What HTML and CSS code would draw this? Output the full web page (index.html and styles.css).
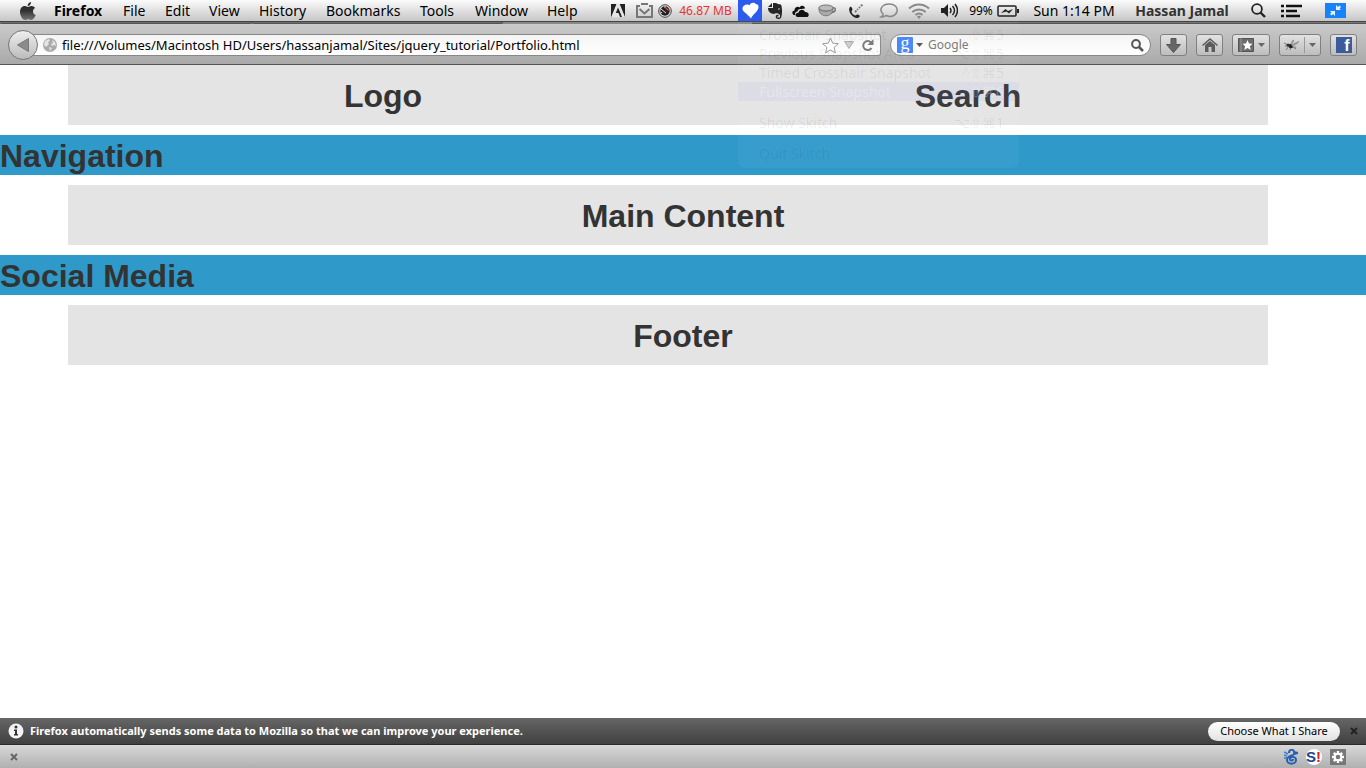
FILE: index.html
```html
<!DOCTYPE html>
<html lang="en">
<head>
    <meta charset="UTF-8">
    <meta name="viewport" content="width=device-width, initial-scale=1.0">
    <title>Portfolio</title>
    <link rel="stylesheet" href="styles.css">
</head>
<body>
    <header class="menubar">
        <nav class="app-menu">
            <button class="apple" aria-label="Apple menu">
                <svg width="16" height="18" viewBox="0 0 16 18">
                    <defs><linearGradient id="appleFill" x1="0" y1="0" x2="0" y2="1"><stop offset="0" stop-color="#222"/><stop offset=".5" stop-color="#333"/><stop offset="1" stop-color="#777"/></linearGradient></defs>
                    <path d="M11 0c.2 2-1.400 4-3.300 4C7.500 2 9 .4 11 0zM8 5c1 0 1.800-.9 3.500-.9 1.400 0 2.700.7 3.500 1.900-3 1.800-2.500 5.900.7 7.100C14.800 15.500 13.300 18 11.500 18c-1.200 0-1.700-.8-3.200-.8S6.200 18 5 18C2.500 18 0 13.500 0 10c0-3.800 2.400-5.900 4.700-5.900C6.200 4.100 7.200 5 8 5z" fill="url(#appleFill)"/>
                </svg>
            </button>
            <button class="bold">Firefox</button>
            <button>File</button>
            <button>Edit</button>
            <button>View</button>
            <button>History</button>
            <button>Bookmarks</button>
            <button>Tools</button>
            <button>Window</button>
            <button>Help</button>
        </nav>
        <div class="tray">
            <svg width="14" height="13" viewBox="0 0 14 13"><path d="M0 0h14v13H0z" fill="#222"/><path d="M5.300 0h3.400L14 13h-3L8.800 7.500 7 3.500 4.800 9h2.700L9 13H0z" fill="#e6e6e6"/><path d="M0 0h5.300L0 13z" fill="#222"/></svg>
            <svg width="17" height="15" viewBox="0 0 17 15"><path d="M4 3H1v11h15V3h-3" fill="none" stroke="#777" stroke-width="2"/><path d="M3.500 6l5 4.500 5-4.500" fill="none" stroke="#777" stroke-width="2"/><path d="M5 1h7" stroke="#777" stroke-width="2"/></svg>
            <svg width="14" height="14" viewBox="0 0 14 14"><circle cx="7" cy="7" r="6.300" fill="#ddd" stroke="#444"/><circle cx="7" cy="7" r="4.700" fill="#222"/><path d="M3 5l5 4M7 2v2M3 9l1-1" stroke="#ddd"/><path d="M7.500 3.500l3 3" stroke="#e33" stroke-width="1.500"/></svg>
            <span class="memory">46.87 MB</span>
            <div class="skitch">
                <button class="skitch-button" aria-label="Skitch">
                    <svg width="17" height="17" viewBox="0 0 17 17"><path d="M7.500 3.500C6 1.500 1 2.500.5 6c-.5 4 4 4.500 8.500 10.500 1.500-4.500 8-7 7.500-12C16 2 14.500 2.200 14 2.500 13.500 0 8 0 7.500 3.500z" fill="#fff"/></svg>
                </button>
                <div class="skitch-menu">
                    <button>Crosshair Snapshot <span>⇧⌘5</span></button>
                    <button>Previous Snapshot Area <span>⌥⇧⌘5</span></button>
                    <button>Timed Crosshair Snapshot <span>^⇧⌘5</span></button>
                    <button class="selected">Fullscreen Snapshot <span>⇧⌘6</span></button>
                    <button class="separated">Show Skitch <span>⌥⇧⌘1</span></button>
                    <button class="separated">Quit Skitch</button>
                </div>
            </div>
            <svg width="14" height="16" viewBox="0 0 14 16"><path d="M4 0v4H0zM5 0h3c1 0 1 .8 2 1 2.500.3 3.300.5 3.500 2 .8 4 .6 8.500-.2 11-.5 1.500-1.300 2-2.800 2-2.200 0-2.800-1-2.800-2.400s1-2 2.800-1.900v1.600H9.300v1.200H12V12C10 9.500 8 11 7.500 10 7 12 0 11 0 5h5z" fill="#262626"/><circle cx="11" cy="6" r=".8" fill="#ddd"/></svg>
            <svg width="17" height="12" viewBox="0 0 17 12"><path d="M2 10C-.5 9 0 5.500 2.500 5.500 2.500 2 6 1 7.500 2.500 9-.5 13 .5 13 3.500L9.500 4C7 3.500 5.500 5 5.500 6.500 3 7 2.500 9 3.500 10z" fill="#111"/><path d="M5 12C2.500 11 3.500 7.500 6.500 7.800 7 4 12 4 13 7c3.500-.5 5 3.500 2.500 5z" fill="#111"/></svg>
            <svg width="18" height="13" viewBox="0 0 18 13"><ellipse cx="8" cy="4" rx="7.300" ry="3" fill="#bbb" stroke="#777"/><path d="M1 5c0 9 14 9 14 0-4 3-10 3-14 0z" fill="#aaa" stroke="#777"/><path d="M14.500 4c4-1 4 4-1 4.500" fill="none" stroke="#777" stroke-width="1.500"/></svg>
            <svg width="15" height="16" viewBox="0 0 15 16"><path d="M1 4c1-.8 2 0 2.500 2.500.1.900-1 1.200-1 2 .3 2 2 3.700 4 4 .8 0 1-1.200 2-1 2 .5 2.800 1.200 2 2.200C9 16 5.500 15 3.500 13 .5 10.500-.8 6 1 4z" fill="#222"/><path d="M6 9l3-3M10 5l1-1M12 3l2-2" stroke="#777" stroke-width="2" stroke-dasharray="2 1"/></svg>
            <svg width="19" height="16" viewBox="0 0 19 16"><path d="M2 14c2-1 2.500-2 2-3C-1 6 4 1 10 1s9 3.500 8 7.500C17 13 11 14.500 7 12.500 5.500 14 4 14.200 2 14z" fill="none" stroke="#888" stroke-width="1.500"/></svg>
            <svg width="22" height="16" viewBox="0 0 22 16"><path d="M1 5.500c6-5.300 14-5.300 20 0M4.300 9c4-3.500 9.400-3.500 13.400 0M7.500 12c2.300-2 4.700-2 7 0" fill="none" stroke="#888" stroke-width="2"/><path d="M9 13.500q2-1.500 4 0L11 16z" fill="#888"/></svg>
            <svg width="17" height="15" viewBox="0 0 17 15"><path d="M0 5h3l4-4v13l-4-4H0z" fill="#222"/><path d="M9 5q2 2.500 0 5M11.500 3q4 4.500 0 9M14 1q5 6.500 0 13" fill="none" stroke="#222" stroke-width="1.500"/></svg>
            <span class="percent">99%</span>
            <svg width="22" height="12" viewBox="0 0 22 12"><rect x="1" y="1" width="18" height="10" rx="1" fill="none" stroke="#222" stroke-width="1.500"/><path d="M20 4h2v4h-2z" fill="#222"/><path d="M4 8l4.500-4 2.500 2 5-2-4 4.500-2.500-2z" fill="#222"/></svg>
            <span>Sun 1:14 PM</span>
            <span class="user">Hassan Jamal</span>
            <svg width="15" height="15" viewBox="0 0 15 15"><circle cx="6" cy="6" r="4.900" fill="none" stroke="#222" stroke-width="1.800"/><path d="M9.500 9.500L14 14" stroke="#222" stroke-width="2.400"/></svg>
            <svg width="22" height="14" viewBox="0 0 22 14"><path d="M0 2h3M0 7h3M0 12h3M5 2h16M5 7h11M5 12h14" stroke="#111" stroke-width="2.600"/></svg>
            <svg width="21" height="15" viewBox="0 0 21 15"><path d="M0 0h21v15H0z" fill="#1683fb"/><path d="M11 2v5h5l-1.500-1.500L16 4l-1.500-1.500L13 4zM10 13V8H5l1.500 1.500L5 11l1.500 1.500L8 11z" fill="#e8f2ff"/></svg>
        </div>
    </header>

    <div class="tab-strip"><div class="tab"></div><div class="tab"></div><div class="tab-current"></div><div class="tab-rest"></div></div>

    <div class="toolbar">
        <button class="back" aria-label="Back"><svg width="12" height="14" viewBox="0 0 12 14"><path d="M11.500.5v13L.5 7z" fill="#8b8b8b" stroke="#777"/></svg></button>
        <div class="address">
            <svg width="14" height="14" viewBox="0 0 14 14"><circle cx="7" cy="7" r="7" fill="#aaa"/><path d="M2 3l4-2 1 2-2 1 1 2-3 3-2-2zM9 2l3 2 1 4-2-1-2 1-1-2 2-1zM6 9l3 1-2 3z" fill="#e5e5e5"/></svg>
            <input type="text" aria-label="Address" value="file:///Volumes/Macintosh HD/Users/hassanjamal/Sites/jquery_tutorial/Portfolio.html">
            <svg width="17" height="17" viewBox="0 0 17 17"><path d="M8.500 1l2.200 5.200 5.600.5-4.200 3.700 1.300 5.500-4.900-3-4.900 3 1.300-5.500L.7 6.700l5.600-.5z" fill="#fff" stroke="#999"/></svg>
            <svg width="10" height="8" viewBox="0 0 10 8"><path d="M.5.5h9L5 7.500z" fill="#ccc" stroke="#aaa"/></svg>
            <svg class="reload" width="13" height="13" viewBox="0 0 13 13"><path d="M10 3.500A4.500 4.500 0 1 0 10.500 9" fill="none" stroke="#777" stroke-width="2"/><path d="M12.500 0v6h-6z" fill="#777"/></svg>
        </div>
        <div class="search">
            <span class="google">g</span>
            <svg width="7" height="4" viewBox="0 0 7 4"><path d="M0 0h7L3.500 4z" fill="#555"/></svg>
            <input type="text" aria-label="Search the web" placeholder="Google">
            <svg width="13" height="13" viewBox="0 0 13 13"><circle cx="5" cy="5" r="3.900" fill="none" stroke="#555" stroke-width="2"/><path d="M8 8l4 4" stroke="#555" stroke-width="2.500"/></svg>
        </div>
        <button class="tool" aria-label="Downloads"><svg width="15" height="15" viewBox="0 0 15 15"><path d="M5 .5h5v6h4.500l-7 8-7-8H5z" fill="#666" stroke="#555"/></svg></button>
        <button class="tool" aria-label="Home"><svg width="16" height="14" viewBox="0 0 16 14"><path d="M8 0l8 7-1 1-7-6-7 6-1-1zM3 7l5-4 5 4v7H9.500V9h-3v5H3z" fill="#5c5c5c"/></svg></button>
        <button class="tool wide" aria-label="Bookmarks list">
            <svg width="16" height="14" viewBox="0 0 16 14"><path d="M.5.500h15v13H.5z" fill="#6c6c6c" stroke="#555"/><path d="M3 0v14" stroke="#999"/><path d="M9.500 2l1.500 3.500 3.500.3-2.600 2.400.8 3.800-3.200-2-3.200 2 .8-3.800-2.600-2.400 3.500-.3z" fill="#fff"/></svg>
            <svg width="7" height="4" viewBox="0 0 7 4"><path d="M0 0h7L3.500 4z" fill="#666"/></svg>
        </button>
        <button class="tool wider" aria-label="Firebug">
            <svg width="16" height="14" viewBox="0 0 16 14"><path d="M0 5l4 2M2 12l3-4M1 8h4M6 12l1-4M9 9l3 2" stroke="#777" fill="none"/><circle cx="4" cy="7" r="1.500" fill="#333"/><circle cx="7" cy="8" r="2.300" fill="#222"/><path d="M7 6c0-3 2-5 3-4 .5 1-1 3-2 4l7-3c1 1-2 4-7 5 4 0 5 1 4 2-2 0-4-1-5-4z" fill="#999"/></svg>
            <i class="divider"></i>
            <svg width="7" height="4" viewBox="0 0 7 4"><path d="M0 0h7L3.500 4z" fill="#666"/></svg>
        </button>
        <button class="tool" aria-label="Facebook"><span class="facebook">f</span></button>
    </div>

    <main>
        <div class="container split">
            <h1>Logo</h1>
            <h1>Search</h1>
        </div>
        <div class="band"><h1>Navigation</h1></div>
        <div class="container"><h1>Main Content</h1></div>
        <div class="band"><h1>Social Media</h1></div>
        <div class="container"><h1>Footer</h1></div>
    </main>

    <div class="notification">
        <svg width="16" height="16" viewBox="0 0 16 16"><circle cx="8" cy="8" r="7.500" fill="#f4f4f4"/><circle cx="8" cy="4" r="1.500" fill="#333"/><path d="M6 6.500h3V11h1v1.500H6V11h1V8H6z" fill="#333"/></svg>
        <p>Firefox automatically sends some data to Mozilla so that we can improve your experience.</p>
        <button class="choose">Choose What I Share</button>
        <button class="close" aria-label="Dismiss"><svg width="8" height="8" viewBox="0 0 8 8"><path d="M1 1l6 6M7 1L1 7" stroke="#222" stroke-width="2"/></svg></button>
    </div>
    <footer class="addon-bar">
        <button class="close" aria-label="Close add-on bar"><svg width="8" height="8" viewBox="0 0 8 8"><path d="M1 1l6 6M7 1L1 7" stroke="#666" stroke-width="2"/></svg></button>
        <div class="addons">
            <svg width="14" height="16" viewBox="0 0 14 16"><path d="M5 4c0-4 5-4 5-1l4 1-4 1c0 2-7 1-7 6 0 5 9 5 9 0 0-4-6-4-6-1 0 2 3 2 3 0" fill="none" stroke="#285fb0" stroke-width="2"/><path d="M0 3l4 2M0 6l3 1M0 9h3" stroke="#3f7bd0" stroke-width="1.500"/></svg>
            <span class="stumble">S<b>!</b></span>
            <svg width="16" height="16" viewBox="0 0 16 16"><path d="M0 0h16v16H0z" fill="#777"/><path d="M8 2v12M2 8h12M3.800 3.800l8.400 8.400M12.200 3.800l-8.400 8.400" stroke="#fff" stroke-width="2.400"/><circle cx="8" cy="8" r="3.300" fill="#777" stroke="#fff" stroke-width="2"/></svg>
        </div>
    </footer>
</body>
</html>
```
FILE: styles.css
```css
* {
    box-sizing: border-box;
}
body {
    margin: 0;
    min-height: 100vh;
    display: flex;
    flex-direction: column;
    background: #fff;
    color: #000;
    font: 14px/20px "Noto Sans", sans-serif;
}
button {
    margin: 0;
    padding: 0;
    border: 0;
    background: none;
    color: inherit;
    font: inherit;
    text-align: left;
}
input {
    min-width: 0;
    padding: 0;
    border: 0;
    outline: 0;
    background: none;
    font: inherit;
}
svg {
    display: block;
    flex: none;
}

/* menu bar */
.menubar {
    display: flex;
    justify-content: space-between;
    height: 22px;
    background: linear-gradient(#fbfbfb, #c6c6c6);
    border-bottom: 1px solid #444;
}
.app-menu {
    display: grid;
    grid-template-columns: 34px 69px 42px 44px 50px 67px 94px 55px 72px 40px;
    padding-left: 20px;
    align-items: center;
}
.bold {
    font-weight: bold;
}
.tray {
    display: grid;
    grid-template-columns: 26px 26px 16px 65px 24px 26px 24px 30px 28px 36px 26px 34px 30px 24px 108px 108px 44px 24px 62px;
    align-items: center;
    justify-items: center;
    white-space: nowrap;
}
.memory {
    color: #e8322a;
    font-size: 12px;
}
.percent {
    font-size: 12px;
}
.user {
    color: #333;
    font-weight: bold;
}
.skitch {
    position: relative;
    z-index: 2;
    width: 24px;
    height: 21px;
    background: #2d5bf0;
}
.skitch-button {
    display: block;
    padding: 2px 4px;
}
/* menu is almost faded out */
.skitch-menu {
    position: absolute;
    top: 21px;
    left: 0;
    width: 281px;
    padding: 4px 0 5px;
    border-radius: 0 0 6px 6px;
    background: rgba(255, 255, 255, 0.04);
    color: rgba(0, 0, 0, 0.07);
    pointer-events: none;
}
.skitch-menu button {
    display: flex;
    justify-content: space-between;
    width: 100%;
    padding: 0 15px 0 21px;
    line-height: 19px;
}
.skitch-menu .selected {
    background: rgba(60, 80, 220, 0.06);
    color: rgba(255, 255, 255, 0.3);
}
.skitch-menu .separated {
    margin-top: 12px;
}

/* tabs peeking out above the toolbar */
.tab-strip {
    display: flex;
    height: 2px;
    background: #888;
}
.tab {
    flex: 250 1 0;
    background: #6c6c6c;
    border-right: 1px solid #444;
    border-bottom: 1px solid #555;
    border-radius: 0 0 3px 3px;
}
.tab-current {
    flex: 248 1 0;
}
.tab-rest {
    flex: 612 1 0;
    background: #777;
    border-bottom: 1px solid #555;
}

.toolbar {
    display: flex;
    align-items: center;
    gap: 9px;
    height: 41px;
    padding: 2px 9px 0 8px;
    background: linear-gradient(#cacaca, #a9a9a9);
    border-bottom: 1px solid #555;
    font-size: 12px;
}
.back {
    display: flex;
    align-items: center;
    justify-content: center;
    flex: none;
    z-index: 1;
    width: 30px;
    height: 30px;
    border: 1px solid #777;
    border-radius: 50%;
    background: linear-gradient(#eee, #bbb);
}
.address {
    display: flex;
    align-items: center;
    flex: 1;
    gap: 5px;
    height: 22px;
    margin-left: -18px;
    padding: 0 6px 0 14px;
    border: 1px solid #888;
    border-left: 0;
    border-radius: 0 3px 3px 0;
    background: linear-gradient(#f4f4f4, #fff);
}
.address input {
    flex: 1;
    font-size: 13px;
}
.reload {
    margin-left: 2px;
}
.search {
    display: flex;
    align-items: center;
    gap: 3px;
    width: 261px;
    height: 22px;
    padding: 0 6px;
    border: 1px solid #888;
    border-radius: 11px;
    background: linear-gradient(#f4f4f4, #fff);
}
.search input {
    flex: 1;
    margin-left: 2px;
}
.search input::placeholder {
    color: #777;
    opacity: 1;
}
.google {
    width: 16px;
    height: 16px;
    border-radius: 1px;
    background: #4486f4;
    color: #fff;
    font: 18px/12px "Liberation Serif", serif;
    text-align: center;
}
.tool {
    display: flex;
    align-items: center;
    justify-content: center;
    flex: none;
    gap: 4px;
    width: 27px;
    height: 22px;
    border: 1px solid #808080;
    border-radius: 3px;
    background: linear-gradient(#e2e2e2, #bdbdbd);
}
.wide {
    width: 38px;
}
.wider {
    width: 42px;
}
.divider {
    width: 1px;
    height: 16px;
    background: #999;
}
.facebook {
    width: 16px;
    height: 16px;
    padding-right: 2px;
    background: #3b5b9a;
    color: #fff;
    font: bold 16px/18px "Liberation Sans", sans-serif;
    text-align: right;
}

/* portfolio page */
main {
    flex: 1;
}
.container {
    max-width: 1200px;
    margin: 0 auto 10px;
    padding: 10px 0 10px 30px;
    background: #e4e4e4;
    position: relative;
    left: -15px;
}
.split {
    display: grid;
    grid-template-columns: 570fr 540fr;
    gap: 30px;
    padding-right: 30px;
}
.band {
    margin-bottom: 10px;
    background: #2f99ca;
}
h1 {
    margin: 0;
    padding-top: 2px;
    color: #333;
    font: bold 32px/38px "Liberation Sans", sans-serif;
    text-align: center;
}
.band h1 {
    text-align: left;
}

/* bottom bars */
.notification {
    display: flex;
    align-items: center;
    gap: 6px;
    height: 27px;
    padding: 0 8px;
    border-bottom: 1px solid #2a2a2a;
    background: linear-gradient(#666, #404040);
    color: #fff;
    font-size: 11px;
}
.notification p {
    flex: 1;
    margin: 0;
    font-weight: bold;
}
.choose {
    width: 132px;
    height: 19px;
    margin-right: 4px;
    border-radius: 10px;
    background: linear-gradient(#fff, #e2e2e2);
    color: #000;
    line-height: 18px;
    text-align: center;
}
.addon-bar {
    display: flex;
    align-items: center;
    justify-content: space-between;
    height: 23px;
    padding: 0 20px 0 10px;
    background: linear-gradient(#d8d8d8, #b0b0b0);
}
.addons {
    display: flex;
    align-items: center;
    gap: 8px;
}
.stumble {
    width: 16px;
    height: 16px;
    border-radius: 50%;
    background: #fff;
    color: #20458c;
    font: bold 15px/16px "Liberation Sans", sans-serif;
    white-space: nowrap;
}
.stumble b {
    color: #e02020;
}
```
